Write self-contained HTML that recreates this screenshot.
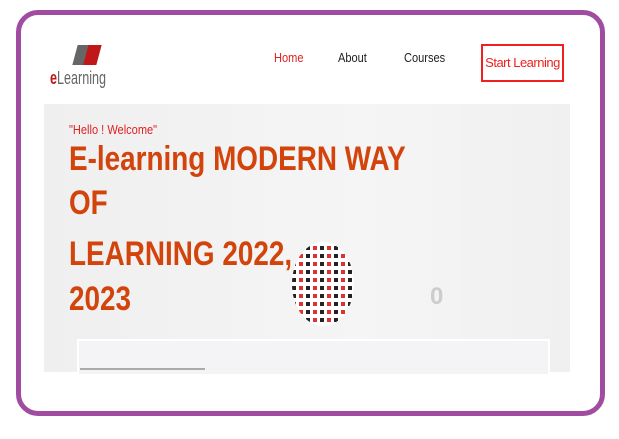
<!DOCTYPE html>
<html><head><meta charset="utf-8"><style>
html,body{margin:0;padding:0;background:#fff;width:619px;height:439px;overflow:hidden;font-family:"Liberation Sans",sans-serif}
.frame{position:absolute;left:16px;top:10px;width:579px;height:396px;border:5px solid #a04ca0;border-radius:22px;background:#fff}
.hero{position:absolute;left:44px;top:104px;width:526px;height:268px;background:linear-gradient(90deg,#efefef,#f5f5f5 60%,#f0f0f0)}
.nav{position:absolute;top:50px;font-size:13px;transform:scaleX(.85);transform-origin:left}
.btn{position:absolute;left:481px;top:44px;width:79px;height:34px;border:2px solid #f02020;color:#f02020;font-size:13px;line-height:34px;text-align:center;letter-spacing:-.5px}
.h{position:absolute;left:69px;color:#d2440c;font-weight:bold;font-size:34px;transform:scaleX(.82);transform-origin:left;white-space:nowrap;line-height:40px}
.box{position:absolute;left:77px;top:339px;width:469px;height:33px;border:2px solid #fff;border-bottom:none;background:#f4f4f6}
</style></head><body>
<div class="frame"></div>
<div style="position:absolute;left:75px;top:45px;width:24px;height:20px;background:linear-gradient(90deg,#666 0 45%,#c01818 45%);transform:skewX(-15deg)"></div>
<div style="position:absolute;left:50px;top:68px;font-size:18px;color:#666;transform:scaleX(.7);transform-origin:left;white-space:nowrap"><span style="color:#c01818;font-weight:bold">e</span>Learning</div>
<div class="nav" style="left:274px;color:#e02020">Home</div>
<div class="nav" style="left:338px;color:#222">About</div>
<div class="nav" style="left:404px;color:#222">Courses</div>
<div class="btn">Start Learning</div>
<div class="hero"></div>
<div style="position:absolute;left:69px;top:122px;color:#e02020;font-size:13px;transform:scaleX(.85);transform-origin:left;white-space:nowrap">"Hello ! Welcome"</div>
<div class="h" style="top:139px">E-learning MODERN WAY</div>
<div class="h" style="top:183px">OF</div>
<div class="h" style="top:234px">LEARNING 2022,</div>
<div class="h" style="top:279px">2023</div>
<div style="position:absolute;left:292px;top:242px;width:62px;height:84px;border-radius:50%;background:repeating-linear-gradient(90deg,transparent 0 4px,#fff 4px 7px),repeating-linear-gradient(0deg,#fff 0 4px,transparent 4px 8px),repeating-linear-gradient(90deg,#222 0 7px,#e03030 7px 14px)"></div>
<div style="position:absolute;left:430px;top:283px;color:#ccc;font-size:24px;font-weight:bold">0</div>
<div class="box"></div>
<div style="position:absolute;left:80px;top:368px;width:125px;height:2px;background:#aaa"></div>
</body></html>
